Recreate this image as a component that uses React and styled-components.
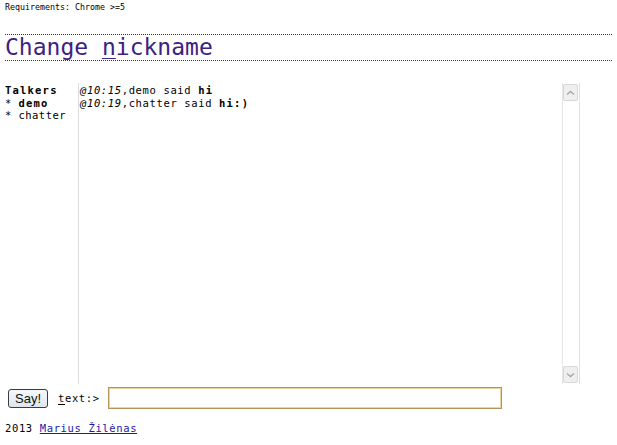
import React, { useState } from "react";
import styled, { createGlobalStyle } from "styled-components";

const Global = createGlobalStyle`
  html, body { margin: 0; padding: 0; background: #fff; }
  body {
    font-family: "DejaVu Sans Mono", "Liberation Mono", monospace;
    color: #000;
  }
`;

const Page = styled.div`
  padding: 0 5px;
  width: 607px;
`;

const Requirements = styled.div`
  font-size: 8.3px;
  line-height: 10px;
  padding-top: 2px;
`;

const Title = styled.h1`
  margin: 22px 0 0 0;
  font-size: 23px;
  font-weight: normal;
  line-height: 25px;
  color: #3d2283;
  border-top: 1px dotted #3d2283;
  border-bottom: 1px dotted #3d2283;
  padding: 0;
  u { text-decoration-thickness: 1px; text-underline-offset: 3px; }
`;

const Chat = styled.div`
  display: flex;
  margin-top: 22px;
  height: 301px;
`;

const Talkers = styled.div`
  width: 73px;
  border-right: 1px solid #dcdcdc;
  font-size: 10.5px;
  letter-spacing: 0.45px;
  line-height: 12.5px;
  padding-top: 1px;
`;

const Strong = styled.b`
  letter-spacing: 1.2px;
`;

const Log = styled.div`
  flex: 0 0 482px;
  padding: 1px 0 0 1px;
  font-size: 10.5px;
  letter-spacing: 0.63px;
  line-height: 12.5px;
  i { font-style: italic; }
`;

const Scrollbar = styled.div`
  width: 16px;
  border-left: 1px solid #e6e6e6;
  border-right: 1px solid #e0e0e0;
  display: flex;
  flex-direction: column;
  justify-content: space-between;
  padding: 1px 0;
`;

const Arrow = styled.div`
  height: 15px;
  margin: 0 1px 0 0;
  border: 1px solid #d8d8d8;
  border-radius: 2px;
  background: #efefef;
  display: flex;
  align-items: center;
  justify-content: center;
`;

const Form = styled.div`
  display: flex;
  align-items: center;
  margin-top: 2px;
  height: 24px;
`;

const Button = styled.button`
  margin-left: 3px;
  width: 40px;
  height: 19px;
  padding: 0;
  border: 1px solid #3c3c3c;
  border-radius: 3px;
  background: linear-gradient(#f4f7fa, #dfe6ec);
  font-family: "Liberation Sans", Arial, sans-serif;
  font-size: 13px;
  color: #111;
`;

const Label = styled.label`
  margin-left: 10px;
  font-size: 10.5px;
  letter-spacing: 0.63px;
  width: 50px;
  u { text-underline-offset: 2px; }
`;

const Input = styled.input`
  width: 394px;
  height: 22px;
  box-sizing: border-box;
  border: 1px solid #b89356;
  box-shadow: inset 0 0 0 1px #e9d4a4;
  outline: none;
  background: #fff;
`;

const Footer = styled.div`
  margin-top: 11px;
  font-size: 10.5px;
  letter-spacing: 0.63px;
  line-height: 14px;
  a { color: #1a1aa6; }
`;

function Chevron({ down }) {
  return (
    <svg width="9" height="6" viewBox="0 0 9 6">
      <path
        d={down ? "M1 1.5 L4.5 4.5 L8 1.5" : "M1 4.5 L4.5 1.5 L8 4.5"}
        fill="none"
        stroke="#a8a8a8"
        strokeWidth="1.4"
      />
    </svg>
  );
}

export default function App() {
  const [text, setText] = useState("");
  const messages = [
    { time: "10:15", who: "demo", msg: "hi" },
    { time: "10:19", who: "chatter", msg: "hi:)" },
  ];
  return (
    <Page>
      <Global />
      <Requirements>Requirements: Chrome &gt;=5</Requirements>
      <Title>
        Change <u>n</u>ickname
      </Title>
      <Chat>
        <Talkers>
          <Strong>Talkers</Strong>
          <div>* <Strong>demo</Strong></div>
          <div>* chatter</div>
        </Talkers>
        <Log>
          {messages.map((m) => (
            <div key={m.time}>
              <i>@{m.time}</i>,{m.who} said <Strong>{m.msg}</Strong>
            </div>
          ))}
        </Log>
        <Scrollbar>
          <Arrow><Chevron /></Arrow>
          <Arrow><Chevron down /></Arrow>
        </Scrollbar>
      </Chat>
      <Form>
        <Button>Say!</Button>
        <Label><u>t</u>ext:&gt;</Label>
        <Input value={text} onChange={(e) => setText(e.target.value)} />
      </Form>
      <Footer>
        2013 <a href="#">Marius Žilėnas</a>
      </Footer>
    </Page>
  );
}
